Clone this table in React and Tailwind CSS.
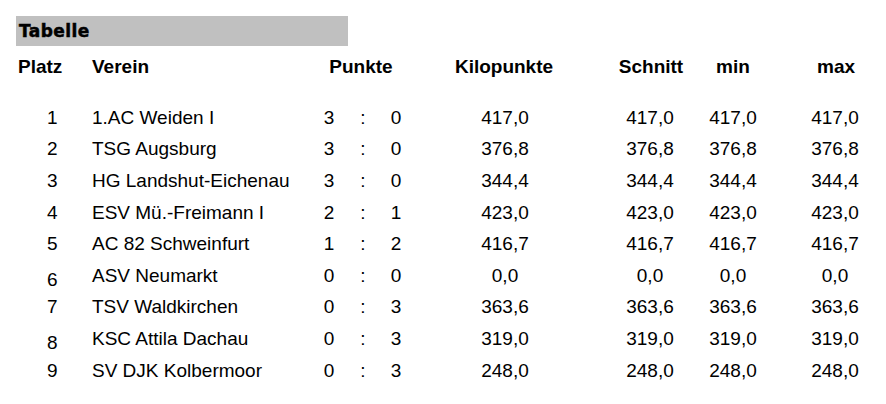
import React from 'react';

const rows = [
  { platz: 1, verein: '1.AC Weiden I', p1: 3, p2: 0, kilo: '417,0', schnitt: '417,0', min: '417,0', max: '417,0' },
  { platz: 2, verein: 'TSG Augsburg', p1: 3, p2: 0, kilo: '376,8', schnitt: '376,8', min: '376,8', max: '376,8' },
  { platz: 3, verein: 'HG Landshut-Eichenau', p1: 3, p2: 0, kilo: '344,4', schnitt: '344,4', min: '344,4', max: '344,4' },
  { platz: 4, verein: 'ESV Mü.-Freimann I', p1: 2, p2: 1, kilo: '423,0', schnitt: '423,0', min: '423,0', max: '423,0' },
  { platz: 5, verein: 'AC 82 Schweinfurt', p1: 1, p2: 2, kilo: '416,7', schnitt: '416,7', min: '416,7', max: '416,7' },
  { platz: 6, verein: 'ASV Neumarkt', p1: 0, p2: 0, kilo: '0,0', schnitt: '0,0', min: '0,0', max: '0,0', low: true },
  { platz: 7, verein: 'TSV Waldkirchen', p1: 0, p2: 3, kilo: '363,6', schnitt: '363,6', min: '363,6', max: '363,6' },
  { platz: 8, verein: 'KSC Attila Dachau', p1: 0, p2: 3, kilo: '319,0', schnitt: '319,0', min: '319,0', max: '319,0', low: true },
  { platz: 9, verein: 'SV DJK Kolbermoor', p1: 0, p2: 3, kilo: '248,0', schnitt: '248,0', min: '248,0', max: '248,0' },
];

const App = () => {
  return (
    <div className="w-[886px] h-[404px] bg-white text-black overflow-hidden pt-4 pl-4 font-['Liberation_Sans',Arial,sans-serif]">
      <div className="w-[332px] h-[30px] bg-[#c0c0c0] pl-[3px] leading-[30px] text-[17px] font-bold tracking-[0.4px] [-webkit-text-stroke:0.5px_black] font-['DejaVu_Sans',sans-serif]">
        Tabelle
      </div>

      {/* header */}
      <div className="flex -ml-4 mt-[10px] h-[21px] leading-[21px] text-[19px] font-bold">
        <div className="shrink-0 w-[92px] pl-[18px]">Platz</div>
        <div className="shrink-0 w-[230px]">Verein</div>
        <div className="shrink-0 w-[78px] text-center">Punkte</div>
        <div className="shrink-0 w-[208px] text-center">Kilopunkte</div>
        <div className="shrink-0 w-[86px] text-center">Schnitt</div>
        <div className="shrink-0 w-[78px] text-center">min</div>
        <div className="shrink-0 w-[100px] ml-[14px] text-center">max</div>
      </div>

      <div className="-ml-4 mt-[24.6px]">
        {rows.map((r) => (
          <div key={r.platz} className="flex items-center h-[31.6px] text-[19px] leading-[21px]">
            <div className="shrink-0 w-[92px] pl-[47px]">
              <span className={r.low ? 'inline-block translate-y-[4px]' : ''}>{r.platz}</span>
            </div>
            <div className="shrink-0 w-[230px] whitespace-nowrap">{r.verein}</div>
            <div className="shrink-0 flex w-[90px]">
              <span className="w-[14px] text-center">{r.p1}</span>
              <span className="w-[54px] text-center">:</span>
              <span className="w-[12px] text-center">{r.p2}</span>
            </div>
            <div className="shrink-0 w-[186px] text-center">{r.kilo}</div>
            <div className="shrink-0 w-[104px] text-center">{r.schnitt}</div>
            <div className="shrink-0 w-[62px] text-center">{r.min}</div>
            <div className="shrink-0 w-[100px] ml-[21px] text-center">{r.max}</div>
          </div>
        ))}
      </div>
    </div>
  );
};

export default App;
